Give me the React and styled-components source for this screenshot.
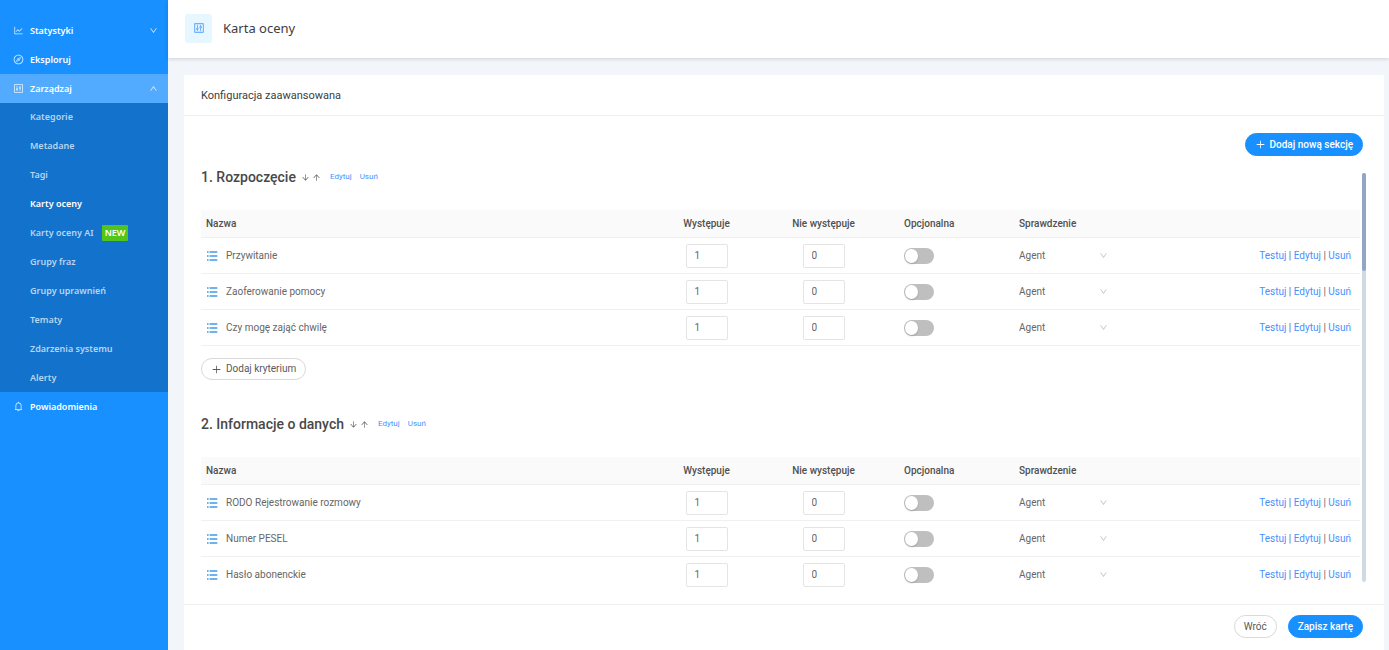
import React from "react";
import styled, { createGlobalStyle, css } from "styled-components";
import {
  AiOutlineLineChart,
  AiOutlineCompass,
  AiOutlineControl,
  AiOutlineBell,
  AiOutlineDown,
  AiOutlineUp,
  AiOutlinePlus,
  AiOutlineArrowDown,
  AiOutlineArrowUp,
} from "react-icons/ai";

const GlobalStyle = createGlobalStyle`
  *, *::before, *::after { box-sizing: border-box; }
  body {
    margin: 0;
    font-family: Roboto, "Open Sans", sans-serif;
    font-size: 10px;
    line-height: 16px;
    color: #666;
    background: #f2f6fa;
  }
  h1, h2, p, ul { margin: 0; padding: 0; }
  a { text-decoration: none; }
  button, input, select { font: inherit; color: inherit; margin: 0; }
  button { cursor: pointer; }
  svg { flex: none; display: block; }
`;

const Layout = styled.div`
  display: flex;
  height: 100vh;
`;

const Sidebar = styled.nav`
  flex: none;
  width: 168px;
  padding-top: 16px;
  background: #1890ff;
  font-family: "Noto Sans", sans-serif;
  font-size: 9px;
  font-weight: 600;
  overflow: hidden;
`;

const menuRow = css`
  display: flex;
  align-items: center;
  gap: 6px;
  width: 100%;
  height: 29px;
  padding: 0 10px 0 13px;
  border: 0;
  color: #fff;
  text-align: left;
  background: ${(p) => (p.$open ? "#52abff" : "transparent")};

  svg { opacity: 0.85; }
`;

const MenuButton = styled.button`
  ${menuRow}
`;

const MenuLink = styled.a`
  ${menuRow}
`;

const MenuLabel = styled.span`
  flex: 1;
`;

const SubMenu = styled.ul`
  display: flex;
  flex-direction: column;
  gap: 1px;
  list-style: none;
  background: #1372cc;
`;

const SubLink = styled.a`
  display: flex;
  align-items: center;
  gap: 8px;
  height: 28px;
  padding-left: 30px;
  color: ${(p) => (p.$active ? "#fff" : "#b8d5f0")};
`;

const NewBadge = styled.span`
  padding: 0 3px;
  border-radius: 1px;
  color: #fff;
  background: #52c41a;
`;

const Main = styled.main`
  flex: 1;
  min-width: 0;
  display: flex;
  flex-direction: column;
`;

const PageHeader = styled.header`
  flex: none;
  display: flex;
  align-items: center;
  gap: 11px;
  height: 58px;
  padding: 0 17px 2px;
  background: #fff;
  box-shadow: 0 1px 4px rgba(0, 21, 41, 0.16);
`;

const HeaderIcon = styled.span`
  display: flex;
  align-items: center;
  justify-content: center;
  width: 27px;
  height: 29px;
  border-radius: 3px;
  color: #4d9bff;
  background: #e6f7ff;
`;

const PageTitle = styled.h1`
  font-family: "Noto Sans", sans-serif;
  font-size: 13px;
  font-weight: 400;
  color: #404040;
`;

const Card = styled.section`
  flex: 1;
  min-height: 0;
  display: flex;
  flex-direction: column;
  margin: 17px 5px 0 16px;
  background: #fff;
`;

const CardTitle = styled.h2`
  padding: 13px 17px 11px;
  border-bottom: 1px solid #f0f0f0;
  font-size: 11px;
  font-weight: 400;
  color: #404040;
`;

const Toolbar = styled.div`
  display: flex;
  justify-content: flex-end;
  padding: 17px 21px 0;
`;

const PillButton = styled.button`
  display: inline-flex;
  align-items: center;
  justify-content: center;
  gap: 4px;
  height: ${(p) => (p.$small ? "22px" : "23px")};
  padding: 0 9px;
  border-radius: 12px;
  border: 1px solid ${(p) => (p.$primary ? "#1890ff" : "#d9d9d9")};
  color: ${(p) => (p.$primary ? "#fff" : "#595959")};
  background: ${(p) => (p.$primary ? "#1890ff" : "#fff")};
  font-weight: ${(p) => (p.$primary ? 500 : 400)};
`;

const Scroller = styled.div`
  flex: 1;
  min-height: 0;
  display: flex;
  gap: 2px;
  padding: 0 18px 16px 17px;
`;

const ScrollBody = styled.div`
  flex: 1;
  min-width: 0;
  overflow-y: auto;
  scrollbar-width: none;
`;

const Track = styled.div`
  flex: none;
  width: 4px;
  margin: 17px 0 6px;
  border-radius: 2px;
  background: #d0dae3;
`;

const Thumb = styled.div`
  height: 24%;
  border-radius: 2px;
  background: #93a5c4;
`;

const Section = styled.section`
  padding-top: 10px;
  padding-bottom: 23px;
`;

const SectionHead = styled.div`
  display: flex;
  align-items: center;
  height: 22px;
  margin-bottom: 22px;
`;

const SectionTitle = styled.h2`
  font-size: 14px;
  font-weight: 500;
  margin-right: 4px;
  color: #484848;
`;

const ArrowButton = styled.button`
  display: flex;
  padding: 0 1px;
  border: 0;
  background: none;
`;

const Link = styled.a`
  color: #4791ff;
`;

const SmallLinks = styled.span`
  display: flex;
  gap: 8px;
  margin-left: 8px;
  font-size: 8px;
`;

const Table = styled.table`
  width: 100%;
  table-layout: fixed;
  border-collapse: separate;
  border-spacing: 0;
  margin-bottom: 12px;
`;

const Col = styled.col`
  width: ${(p) => p.$width};
`;

const cell = css`
  padding: 0 ${(p) => (p.$end ? "9px" : "0")} 0 ${(p) => p.$start || "0"};
  border-bottom: 1px solid #f0f0f0;
  text-align: ${(p) => p.$align || "left"};
`;

const HeadCell = styled.th`
  ${cell}
  height: 28px;
  font-weight: 500;
  color: #505050;
  background: #fafafa;
`;

const Cell = styled.td`
  ${cell}
  height: 36px;
`;

const CriterionName = styled.span`
  display: flex;
  align-items: center;
  gap: 8px;

  svg { color: #3f9ae8; }
`;

const ScoreInput = styled.input`
  display: block;
  width: 42px;
  height: 24px;
  margin: 0 auto;
  padding: 0 8px;
  border: 1px solid #e4e4e4;
  border-radius: 2px;
  background: #fff;
`;

const Switch = styled.input`
  appearance: none;
  display: flex;
  align-items: center;
  width: 30px;
  height: 16px;
  padding: 0 1px;
  border-radius: 8px;
  background: #bfbfbf;
  cursor: pointer;

  &::before {
    content: "";
    width: 13px;
    height: 14px;
    border-radius: 50%;
    background: #fff;
    box-shadow: 0 1px 2px rgba(0, 35, 11, 0.2);
  }
  &:checked { justify-content: flex-end; background: #1890ff; }
`;

const SelectBox = styled.span`
  display: grid;
  align-items: center;
  width: 89px;

  > * { grid-area: 1 / 1; }
  svg { justify-self: end; color: #bfbfbf; pointer-events: none; }
`;

const Select = styled.select`
  appearance: none;
  width: 100%;
  padding: 0;
  border: 0;
  background: none;
`;

const Footer = styled.footer`
  flex: none;
  display: flex;
  justify-content: flex-end;
  gap: 11px;
  padding: 10px 21px 12px;
  border-top: 1px solid #f0f0f0;
`;

const submenu = [
  "Kategorie",
  "Metadane",
  "Tagi",
  "Karty oceny",
  "Karty oceny AI",
  "Grupy fraz",
  "Grupy uprawnień",
  "Tematy",
  "Zdarzenia systemu",
  "Alerty",
];

const sections = [
  {
    title: "1. Rozpoczęcie",
    criteria: ["Przywitanie", "Zaoferowanie pomocy", "Czy mogę zająć chwilę"],
    extendable: true,
  },
  {
    title: "2. Informacje o danych",
    criteria: ["RODO Rejestrowanie rozmowy", "Numer PESEL", "Hasło abonenckie"],
  },
];

function ListIcon() {
  return (
    <svg width="12" height="12" viewBox="0 0 12 12" fill="currentColor" aria-hidden="true">
      <path d="M1 1.2h1.6v1.5H1zM1 5.2h1.6v1.5H1zM1 9.2h1.6v1.5H1zM3.6 1.2H11.3v1.5H3.6zM3.6 5.2H11.3v1.5H3.6zM3.6 9.2H11.3v1.5H3.6z" />
    </svg>
  );
}

function CriterionRow({ name }) {
  return (
    <tr>
      <Cell $start="5px">
        <CriterionName>
          <ListIcon />
          {name}
        </CriterionName>
      </Cell>
      <Cell>
        <ScoreInput defaultValue="1" aria-label={`${name}: występuje`} />
      </Cell>
      <Cell>
        <ScoreInput defaultValue="0" aria-label={`${name}: nie występuje`} />
      </Cell>
      <Cell $start="22px">
        <Switch type="checkbox" role="switch" aria-label={`${name}: opcjonalna`} />
      </Cell>
      <Cell $start="22px">
        <SelectBox>
          <Select aria-label={`${name}: sprawdzenie`}>
            <option>Agent</option>
          </Select>
          <AiOutlineDown size={9} />
        </SelectBox>
      </Cell>
      <Cell $align="right" $end>
        <Link href="#testuj">Testuj</Link> | <Link href="#edytuj">Edytuj</Link> |{" "}
        <Link href="#usun">Usuń</Link>
      </Cell>
    </tr>
  );
}

function CriteriaSection({ title, criteria, extendable }) {
  return (
    <Section>
      <SectionHead>
        <SectionTitle>{title}</SectionTitle>
        <ArrowButton aria-label="Przesuń w dół">
          <AiOutlineArrowDown size={9} />
        </ArrowButton>
        <ArrowButton aria-label="Przesuń w górę">
          <AiOutlineArrowUp size={9} />
        </ArrowButton>
        <SmallLinks>
          <Link href="#edytuj-sekcje">Edytuj</Link>
          <Link href="#usun-sekcje">Usuń</Link>
        </SmallLinks>
      </SectionHead>
      <Table>
        <colgroup>
          <Col />
          <Col $width="117px" />
          <Col $width="117px" />
          <Col $width="115px" />
          <Col $width="137px" />
          <Col $width="226px" />
        </colgroup>
        <thead>
          <tr>
            <HeadCell $start="5px">Nazwa</HeadCell>
            <HeadCell $align="center">Występuje</HeadCell>
            <HeadCell $align="center">Nie występuje</HeadCell>
            <HeadCell $start="22px">Opcjonalna</HeadCell>
            <HeadCell $start="22px">Sprawdzenie</HeadCell>
            <HeadCell />
          </tr>
        </thead>
        <tbody>
          {criteria.map((name) => (
            <CriterionRow key={name} name={name} />
          ))}
        </tbody>
      </Table>
      {extendable && (
        <PillButton $small>
          <AiOutlinePlus size={11} />
          Dodaj kryterium
        </PillButton>
      )}
    </Section>
  );
}

export default function App() {
  return (
    <>
      <GlobalStyle />
      <Layout>
        <Sidebar>
          <MenuButton>
            <AiOutlineLineChart size={11} />
            <MenuLabel>Statystyki</MenuLabel>
            <AiOutlineDown size={9} />
          </MenuButton>
          <MenuLink href="#eksploruj">
            <AiOutlineCompass size={11} />
            <MenuLabel>Eksploruj</MenuLabel>
          </MenuLink>
          <MenuButton $open aria-expanded="true">
            <AiOutlineControl size={11} />
            <MenuLabel>Zarządzaj</MenuLabel>
            <AiOutlineUp size={9} />
          </MenuButton>
          <SubMenu>
            {submenu.map((label) => (
              <li key={label}>
                <SubLink href="#menu" $active={label === "Karty oceny"}>
                  {label}
                  {label === "Karty oceny AI" && <NewBadge>NEW</NewBadge>}
                </SubLink>
              </li>
            ))}
          </SubMenu>
          <MenuLink href="#powiadomienia">
            <AiOutlineBell size={11} />
            <MenuLabel>Powiadomienia</MenuLabel>
          </MenuLink>
        </Sidebar>
        <Main>
          <PageHeader>
            <HeaderIcon>
              <AiOutlineControl size={12} />
            </HeaderIcon>
            <PageTitle>Karta oceny</PageTitle>
          </PageHeader>
          <Card>
            <CardTitle>Konfiguracja zaawansowana</CardTitle>
            <Toolbar>
              <PillButton $primary>
                <AiOutlinePlus size={11} />
                Dodaj nową sekcję
              </PillButton>
            </Toolbar>
            <Scroller>
              <ScrollBody>
                {sections.map((section) => (
                  <CriteriaSection key={section.title} {...section} />
                ))}
              </ScrollBody>
              <Track>
                <Thumb />
              </Track>
            </Scroller>
            <Footer>
              <PillButton>Wróć</PillButton>
              <PillButton $primary>Zapisz kartę</PillButton>
            </Footer>
          </Card>
        </Main>
      </Layout>
    </>
  );
}
